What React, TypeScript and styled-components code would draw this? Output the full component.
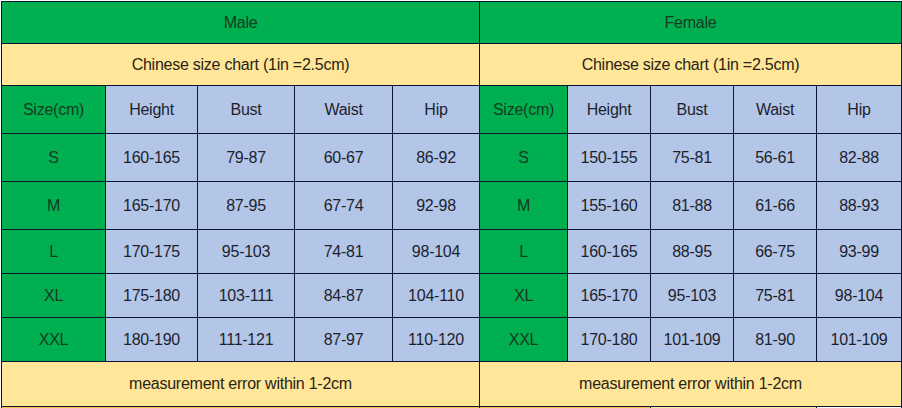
import React from "react";
import styled, { createGlobalStyle } from "styled-components";

const Global = createGlobalStyle`
  html, body { margin: 0; padding: 0; background: #ffffff; overflow: hidden; }
  body { font-family: "Liberation Sans", Arial, sans-serif; }
`;

const Page = styled.div`
  padding: 1px 0 0 1px;
  width: 902px;
  height: 408px;
  box-sizing: border-box;
  overflow: hidden;
`;

const Table = styled.div`
  display: grid;
  grid-template-columns: 104px 92px 97px 98px 87px 88px 83px 83px 83px 85px;
  grid-template-rows: 42px 42px 48px 48px 48px 44px 44px 44px 45px 42px;
  border-left: 1px solid #0b1430;
  border-top: 1px solid #0b1430;
  width: max-content;
`;

type Tone = "green" | "yellow" | "blue" | "orange" | "pale" | "white";

const bg: Record<Tone, string> = {
  green: "#00b050",
  yellow: "#ffe699",
  blue: "#b4c6e7",
  orange: "#f6c342",
  pale: "#fce6a0",
  white: "#ffffff",
};

const fg: Record<Tone, string> = {
  green: "#173a22",
  yellow: "#2a2414",
  blue: "#1c1f2e",
  orange: "#2a2414",
  pale: "#2a2414",
  white: "#2a2414",
};

const Cell = styled.div<{ $tone: Tone; $span?: number }>`
  grid-column: span ${(p) => p.$span ?? 1};
  background: ${(p) => bg[p.$tone]};
  color: ${(p) => fg[p.$tone]};
  border-right: 1px solid #0b1430;
  border-bottom: 1px solid #0b1430;
  display: flex;
  align-items: center;
  justify-content: center;
  font-size: 16px;
  letter-spacing: -0.25px;
  white-space: nowrap;
`;

const cols = ["Height", "Bust", "Waist", "Hip"];

const male: [string, string, string, string, string][] = [
  ["S", "160-165", "79-87", "60-67", "86-92"],
  ["M", "165-170", "87-95", "67-74", "92-98"],
  ["L", "170-175", "95-103", "74-81", "98-104"],
  ["XL", "175-180", "103-111", "84-87", "104-110"],
  ["XXL", "180-190", "111-121", "87-97", "110-120"],
];

const female: [string, string, string, string, string][] = [
  ["S", "150-155", "75-81", "56-61", "82-88"],
  ["M", "155-160", "81-88", "61-66", "88-93"],
  ["L", "160-165", "88-95", "66-75", "93-99"],
  ["XL", "165-170", "95-103", "75-81", "98-104"],
  ["XXL", "170-180", "101-109", "81-90", "101-109"],
];

export default function App() {
  return (
    <>
      <Global />
      <Page>
        <Table>
          <Cell $tone="green" $span={5}>Male</Cell>
          <Cell $tone="green" $span={5}>Female</Cell>
          <Cell $tone="yellow" $span={5}>Chinese size chart (1in =2.5cm)</Cell>
          <Cell $tone="yellow" $span={5}>Chinese size chart (1in =2.5cm)</Cell>
          {[0, 1].map((side) => (
            <React.Fragment key={side}>
              <Cell $tone="green">Size(cm)</Cell>
              {cols.map((c) => (
                <Cell key={c} $tone="blue">{c}</Cell>
              ))}
            </React.Fragment>
          ))}
          {male.map((row, i) => (
            <React.Fragment key={i}>
              {[row, female[i]].map((r, s) => (
                <React.Fragment key={s}>
                  <Cell $tone="green">{r[0]}</Cell>
                  {r.slice(1).map((v, j) => (
                    <Cell key={j} $tone="blue">{v}</Cell>
                  ))}
                </React.Fragment>
              ))}
            </React.Fragment>
          ))}
          <Cell $tone="yellow" $span={5}>measurement error within 1-2cm</Cell>
          <Cell $tone="yellow" $span={5}>measurement error within 1-2cm</Cell>
          <Cell $tone="orange" $span={5} />
          <Cell $tone="orange" $span={2} />
          <Cell $tone="pale" $span={2} />
          <Cell $tone="white" $span={1} />
        </Table>
      </Page>
    </>
  );
}
